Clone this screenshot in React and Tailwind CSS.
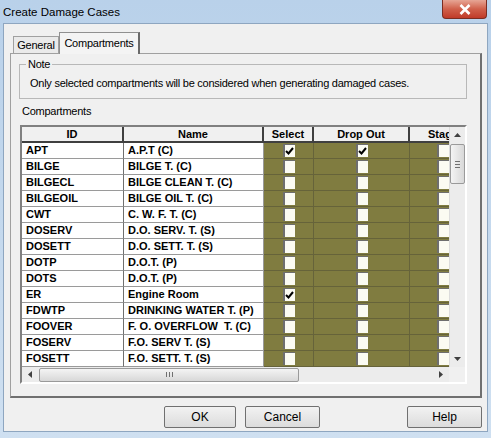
import React from 'react';

const rows = [
    { id: 'APT', name: 'A.P.T (C)', select: true, drop: true },
    { id: 'BILGE', name: 'BILGE T. (C)' },
    { id: 'BILGECL', name: 'BILGE CLEAN T. (C)' },
    { id: 'BILGEOIL', name: 'BILGE OIL T. (C)' },
    { id: 'CWT', name: 'C. W. F. T. (C)' },
    { id: 'DOSERV', name: 'D.O. SERV. T. (S)' },
    { id: 'DOSETT', name: 'D.O. SETT. T. (S)' },
    { id: 'DOTP', name: 'D.O.T. (P)' },
    { id: 'DOTS', name: 'D.O.T. (P)' },
    { id: 'ER', name: 'Engine Room', select: true },
    { id: 'FDWTP', name: 'DRINKING WATER T. (P)' },
    { id: 'FOOVER', name: 'F. O. OVERFLOW\u00a0 T. (C)' },
    { id: 'FOSERV', name: 'F.O. SERV T. (S)' },
    { id: 'FOSETT', name: 'F.O. SETT. T. (S)' },
];

const CheckBox = ({ checked }) => (
    <div className="w-[12px] h-[13px] bg-[#fbfbf2] border-l-2 border-t border-[#6e6e6e] flex items-center justify-center">
        {checked && (
            <svg width="9" height="8" viewBox="0 0 9 8">
                <path d="M1 4 L3.5 6.5 L8 1" stroke="#000" strokeWidth="2" fill="none" />
            </svg>
        )}
    </div>
);

const Button = ({ children, className = '' }) => (
    <button className={`h-[22px] border border-[#707070] rounded-[2px] bg-gradient-to-b from-[#f2f2f2] to-[#dcdcdc] text-[12px] text-black ${className}`}>
        {children}
    </button>
);

const App = () => {
    return (
        <div className="w-[491px] h-[438px] bg-gradient-to-b from-[#b9d1ea] to-[#cfe0f1] flex flex-col overflow-hidden" style={{ fontFamily: '"Liberation Sans", Arial, sans-serif' }}>
            {/* Title bar */}
            <div className="h-[23px] flex items-start justify-between">
                <span className="pl-[3px] pt-[4px] text-[11.5px] text-black">Create Damage Cases</span>
                <div className="mr-[4px] w-[45px] h-[19px] rounded-b-[4px] border border-t-0 border-[#7a2d22] bg-gradient-to-b from-[#e6a595] via-[#d0604b] to-[#c03a28] flex items-center justify-center">
                    <svg width="12" height="11" viewBox="0 0 12 11">
                        <path d="M1.5 1 L10.5 10 M10.5 1 L1.5 10" stroke="#fff" strokeWidth="2.6" />
                    </svg>
                </div>
            </div>

            {/* Body */}
            <div className="mx-[3px] h-[409px] bg-[#f0f0f0] border border-[#8ea6c0] flex flex-col text-[11px] tracking-[-0.25px]">
                {/* Tabs */}
                <div className="h-[29px] flex items-end pl-[9px]">
                    <div className="h-[17px] w-[46px] border border-b-0 border-[#a0a0a0] bg-[#eaeaea] flex items-center justify-center">General</div>
                    <div className="h-[22px] w-[81px] border border-b-0 border-[#909090] border-r-2 border-r-[#6a6a6a] bg-[#f4f4f4] flex items-center justify-center -mb-[1px] relative">Compartments</div>
                </div>

                {/* Tab panel */}
                <div className="ml-[6px] w-[472px] h-[345px] border border-[#a0a0a0] border-r-2 border-r-[#707070] border-b-2 border-b-[#707070] flex flex-col">
                    {/* Note group */}
                    <div className="ml-[8px] mt-[10px] w-[448px] h-[35px] border border-[#b8b8b8] relative">
                        <span className="absolute -top-[8px] left-[6px] px-[2px] bg-[#f0f0f0] leading-[14px]">Note</span>
                        <div className="pl-[10px] pt-[11px] leading-[14px]">Only selected compartments will be considered when generating damaged cases.</div>
                    </div>

                    <div className="ml-[11px] mt-[5px] leading-[14px]">Compartments</div>

                    {/* Grid frame */}
                    <div className="ml-[9px] mt-[7px] w-[447px] h-[259px] border-2 border-t-[#808080] border-l-[#808080] border-r-[#ffffff] border-b-[#ffffff] flex flex-col tracking-normal">
                        <div className="flex h-[240px]">
                            <div className="w-[427px] overflow-hidden flex flex-col text-[11px] font-bold">
                                {/* Header */}
                                <div className="flex h-[16px] shrink-0 bg-[#f0f0f0] border-b-2 border-[#404040]">
                                    <div className="w-[102px] shrink-0 border-r-2 border-[#404040] flex items-center justify-center">ID</div>
                                    <div className="w-[140px] shrink-0 border-r-2 border-[#404040] flex items-center justify-center">Name</div>
                                    <div className="w-[50px] shrink-0 border-r-2 border-[#404040] flex items-center justify-center">Select</div>
                                    <div className="w-[96px] shrink-0 border-r-2 border-[#404040] flex items-center justify-center">Drop Out</div>
                                    <div className="w-[66px] shrink-0 flex items-center justify-center">Stage</div>
                                </div>
                                {rows.map((r) => (
                                    <div key={r.id} className="flex h-[16px] shrink-0">
                                        <div className="w-[102px] shrink-0 bg-white border-r border-b border-[#9a9a9a] border-r-[#707070] pl-[4px] flex items-center whitespace-nowrap">{r.id}</div>
                                        <div className="w-[140px] shrink-0 bg-white border-r border-b border-[#9a9a9a] pl-[4px] flex items-center whitespace-pre overflow-hidden">{r.name}</div>
                                        <div className="w-[50px] shrink-0 bg-[#807c40] border-r border-b border-[#66633a] flex items-center justify-center"><CheckBox checked={r.select} /></div>
                                        <div className="w-[96px] shrink-0 bg-[#807c40] border-r border-b border-[#66633a] flex items-center justify-center"><CheckBox checked={r.drop} /></div>
                                        <div className="w-[66px] shrink-0 bg-[#807c40] border-b border-[#66633a] flex items-center justify-center"><CheckBox /></div>
                                    </div>
                                ))}
                            </div>
                            {/* Vertical scrollbar */}
                            <div className="w-[16px] bg-[#ececec] border-l border-[#dcdcdc] flex flex-col items-center">
                                <div className="h-[16px] flex items-center justify-center">
                                    <svg width="7" height="4" viewBox="0 0 7 4"><path d="M0 4 L3.5 0 L7 4 Z" fill="#404040" /></svg>
                                </div>
                                <div className="mt-[1px] w-[15px] h-[40px] rounded-[2px] border border-[#9a9a9a] bg-gradient-to-r from-[#f4f4f4] to-[#d8d8d8] flex flex-col items-center justify-center gap-[2px]">
                                    <div className="w-[5px] h-px bg-[#707070]" />
                                    <div className="w-[5px] h-px bg-[#707070]" />
                                    <div className="w-[5px] h-px bg-[#707070]" />
                                </div>
                                <div className="flex-1" />
                                <div className="h-[16px] flex items-center justify-center">
                                    <svg width="7" height="4" viewBox="0 0 7 4"><path d="M0 0 L3.5 4 L7 0 Z" fill="#404040" /></svg>
                                </div>
                            </div>
                        </div>
                        {/* Horizontal scrollbar */}
                        <div className="flex h-[15px]">
                            <div className="w-[427px] bg-[#ececec] flex items-center">
                                <div className="w-[16px] flex items-center justify-center">
                                    <svg width="4" height="7" viewBox="0 0 4 7"><path d="M4 0 L0 3.5 L4 7 Z" fill="#404040" /></svg>
                                </div>
                                <div className="ml-[1px] w-[260px] h-[14px] rounded-[2px] border border-[#9a9a9a] bg-gradient-to-b from-[#f4f4f4] to-[#d8d8d8] flex items-center justify-center gap-[2px]">
                                    <div className="w-px h-[5px] bg-[#707070]" />
                                    <div className="w-px h-[5px] bg-[#707070]" />
                                    <div className="w-px h-[5px] bg-[#707070]" />
                                </div>
                                <div className="flex-1" />
                                <div className="w-[16px] flex items-center justify-center">
                                    <svg width="4" height="7" viewBox="0 0 4 7"><path d="M0 0 L4 3.5 L0 7 Z" fill="#404040" /></svg>
                                </div>
                            </div>
                            <div className="w-[16px] bg-[#f0f0f0]" />
                        </div>
                    </div>
                </div>

                {/* Buttons */}
                <div className="flex mt-[8px] pl-[160px] tracking-normal">
                    <Button className="w-[72px]">OK</Button>
                    <Button className="ml-[9px] w-[75px]">Cancel</Button>
                    <Button className="ml-[87px] w-[75px]">Help</Button>
                </div>
            </div>
        </div>
    );
};

export default App;
